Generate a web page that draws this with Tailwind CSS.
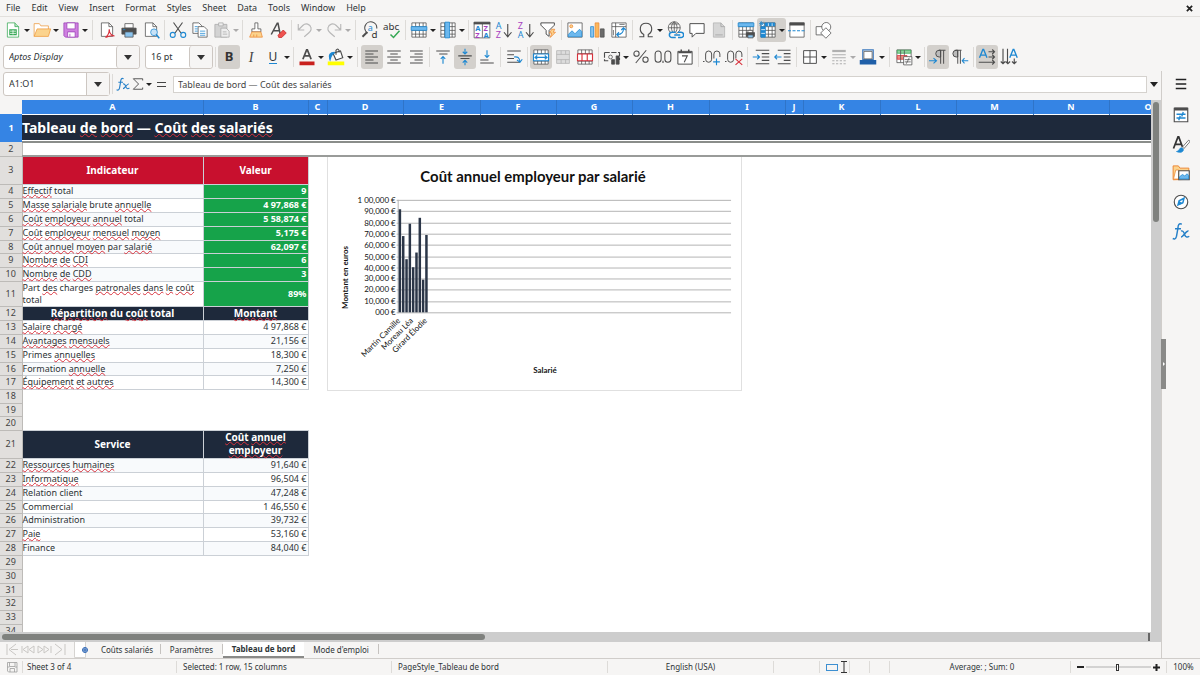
<!DOCTYPE html>
<html lang="fr">
<head>
    <meta charset="UTF-8">
    <meta name="viewport" content="width=device-width, initial-scale=1.0">
    <title>Tableau de bord</title>
    <script src="https://cdn.jsdelivr.net/npm/@tailwindcss/browser@4"></script>
</head>
<!-- fill and stroke on body are inherited by every icon -->
<body class="flex h-screen flex-col overflow-hidden bg-[#f6f5f4] fill-none stroke-[#4d4d4d] font-['Noto_Sans','Open_Sans',sans-serif] text-[9px] text-[#2e3436]">

    <!-- icons, all on a 24 grid -->
    <svg class="hidden">
        <symbol id="new" viewBox="0 0 24 24"><path stroke="#35a854" fill="#fff" d="M4.500 2.500h10l5 5v14h-15z"/><path stroke="#35a854" fill="#b9e6c3" d="M14.500 2.500v5h5"/><path stroke="none" fill="#35a854" d="M7 11h10v8H7z"/><path stroke="#fff" d="M8 13.500h8M8 16.500h8M12 12v6"/></symbol>
        <symbol id="open" viewBox="0 0 24 24"><path stroke="#ed9a3c" fill="#fff" d="M1.500 20.500v-17h7l2 3h10v5"/><path stroke="#ed9a3c" fill="#fbd38d" d="M1.500 20.500l4-10h18l-3 10z"/></symbol>
        <symbol id="save" viewBox="0 0 24 24"><path stroke="#9b3fb5" fill="#cf80e0" d="M2.500 2.500h19v19h-17l-2-2z"/><path stroke="#9b3fb5" fill="#fff" d="M6.500 2.500h11v8h-11zM7.500 14.500h10v7h-10z"/><path stroke="#9b3fb5" d="M10.500 17v4"/></symbol>
        <symbol id="pdf" viewBox="0 0 24 24"><path fill="#fff" d="M4.500 2.500h10l5 5v13h-15z"/><path d="M14.500 2.500v5h5"/><path stroke="#d8313c" stroke-width="1.500" d="M10 22c4-3 5-7 5-11c0 5 2 8 7 9c-4-1-8 0-12 2z"/></symbol>
        <symbol id="print" viewBox="0 0 24 24"><path fill="#fff" d="M6.500 3.500h11v6h-11z"/><path fill="#4d4d4d" d="M2.500 9.500h19v8h-19z"/><path stroke="#1e88d2" d="M4 11.500h3"/><path fill="#8bc4ee" d="M6.500 14.500h11v7h-11z"/></symbol>
        <symbol id="preview" viewBox="0 0 24 24"><path fill="#fff" d="M4.500 2.500h10l5 5v13h-15z"/><path d="M14.500 2.500v5h5"/><circle cx="16" cy="15" r="4.500" stroke="#1e88d2" fill="#c7e2f7"/><path stroke="#1e88d2" stroke-width="2" d="M19 18l4 5"/></symbol>
        <symbol id="cut" viewBox="0 0 24 24"><path stroke-width="1.500" d="M6 2l10 14M18 2L8 16"/><circle cx="5" cy="18.500" r="3.300" stroke="#1e88d2" stroke-width="1.500"/><circle cx="19" cy="18.500" r="3.300" stroke="#1e88d2" stroke-width="1.500"/></symbol>
        <symbol id="copy" viewBox="0 0 24 24"><path fill="#fff" d="M2.500 2.500h8l4 4v10h-12z"/><path fill="#fff" d="M9.500 7.500h8l4 4v10h-12z"/><path stroke="#1e88d2" d="M5 7.500h4M5 10.500h4M5 13.500h4M12 13.500h7M12 16.500h7M12 19h7"/></symbol>
        <symbol id="paste" viewBox="0 0 24 24"><path stroke="#a8a8a8" fill="#d3d3d3" d="M2.500 4.500h16v17h-16z"/><path stroke="#a8a8a8" fill="#eee" d="M7.500 2.500h6v4h-6zM10.500 9.500h7l4 4v8h-11z"/><path stroke="#a8a8a8" d="M13 14.500h5M13 17.500h6"/></symbol>
        <symbol id="brush" viewBox="0 0 24 24"><path fill="#fff" d="M10.500 2.500h4v8h4v4h-12v-4h4z"/><path stroke="#ed8733" fill="#fbd38d" d="M6.500 14.500h12l2 7h-17zM9 21v-3M13 21v-3"/></symbol>
        <symbol id="clear" viewBox="0 0 24 24"><path stroke-width="2" d="M3 18L11 3h1l3 15M6 13h8"/><path stroke="#c62828" fill="#ef5350" d="M12 19l7-7l4 4l-6 6h-4z"/></symbol>
        <symbol id="undo" viewBox="0 0 24 24"><path stroke="#b8b8b8" stroke-width="1.500" d="M3 4v8h8M3 12l6-6c4-4 10-2 11 3c1 4-2 6-9 12"/></symbol>
        <symbol id="redo" viewBox="0 0 24 24"><path stroke="#b8b8b8" stroke-width="1.500" d="M21 4v8h-8M21 12l-6-6c-4-4-10-2-11 3c-1 4 2 6 9 12"/></symbol>
        <symbol id="find" viewBox="0 0 24 24"><path stroke-width="1.500" d="M9 16a8 8 0 1 1 12-6"/><path stroke-width="2.500" d="M8 15l-6 6"/><text x="9" y="13" stroke="none" fill="#1e88d2" font-size="12">a</text><text x="14" y="23" stroke="none" fill="#333" font-size="13">d</text></symbol>
        <symbol id="spell" viewBox="0 0 24 24"><text x="0" y="12" stroke="none" fill="#333" font-size="13">abc</text><path stroke="#35a854" stroke-width="2" d="M10 18l4 4l8-9"/></symbol>
        <symbol id="grid" viewBox="0 0 24 24"><path fill="#fff" d="M2.500 2.500h19v19h-19z"/><path d="M2.500 7.500h19M2.500 12.500h19M2.500 17.500h19M7.500 2.500v19M12.500 2.500v19M17.500 2.500v19"/></symbol>
        <symbol id="row" viewBox="0 0 24 24"><use href="#grid"/><path stroke="#1e88d2" fill="#6cb8ee" d="M1.500 7.500h21v5h-21z"/></symbol>
        <symbol id="col" viewBox="0 0 24 24"><use href="#grid"/><path stroke="#1e88d2" fill="#6cb8ee" d="M8 1.500h6v21H8z"/></symbol>
        <symbol id="sort" viewBox="0 0 24 24"><path fill="#fff" d="M1.500 1.500h21v21h-21z"/><path stroke-width="3" d="M1 3h22"/><path d="M12.500 3v19"/><g stroke="none" font-size="10" font-weight="bold"><text x="3" y="13" fill="#1e88d2">A</text><text x="3" y="22" fill="#a83fc0">Z</text><text x="14" y="13" fill="#a83fc0">Z</text><text x="14" y="22" fill="#1e88d2">A</text></g></symbol>
        <symbol id="az" viewBox="0 0 24 24"><g stroke="none" font-size="12"><text x="1" y="11" fill="#1e88d2">A</text><text x="1" y="23" fill="#a83fc0">Z</text></g><path stroke-width="1.500" d="M17 4v16M12 15l5 6l5-6"/></symbol>
        <symbol id="za" viewBox="0 0 24 24"><g stroke="none" font-size="12"><text x="1" y="11" fill="#a83fc0">Z</text><text x="1" y="23" fill="#1e88d2">A</text></g><path stroke-width="1.500" d="M17 4v16M12 15l5 6l5-6"/></symbol>
        <symbol id="filter" viewBox="0 0 24 24"><path stroke-width="1.300" fill="#fff" d="M2.500 2.500h18v3l-7 7v8l-4-3v-5l-7-7z"/><path stroke="#ed8733" fill="#fbd38d" d="M17 11h4l-2 4h3l-7 7l2-6h-3z"/></symbol>
        <symbol id="image" viewBox="0 0 24 24"><path fill="#fff" d="M2.500 2.500h19v19h-19z"/><circle cx="7" cy="7" r="2" stroke="#ed8733" fill="#fbd38d"/><path stroke="#1e88d2" fill="#6cb8ee" d="M3 21v-3l5-5l4 4l6-6l3 3v7z"/></symbol>
        <symbol id="chart" viewBox="0 0 24 24"><path stroke="#1e88d2" fill="#8bc4ee" d="M3.500 7.500h4v14h-4z"/><path stroke="#ed8733" fill="#fbb85c" d="M9.500 2.500h5v19h-5z"/><path fill="#6b6b6b" d="M16.500 10.500h5v11h-5z"/></symbol>
        <symbol id="pivot" viewBox="0 0 24 24"><path fill="#fff" d="M2.500 2.500h19v19h-19z"/><path d="M2.500 7.500h19M7.500 2.500v19M12.500 4.500h7M4.500 12v7"/><path stroke="#1e88d2" stroke-width="1.500" d="M10 18c5 0 8-2 8-8M15 12l3-3l3 3M12 15l-3 3l3 3"/></symbol>
        <symbol id="omega" viewBox="0 0 24 24"><path stroke-width="1.500" d="M3 21h6v-3c-7-4-6-15 3-15s10 11 3 15v3h6"/></symbol>
        <symbol id="link" viewBox="0 0 24 24"><circle cx="11" cy="9" r="8"/><path d="M3 9h16M11 1v16M5 4h12M11 1c-5 4-5 12 0 16M11 1c5 4 5 12 0 16"/><path stroke="#1e88d2" stroke-width="2" fill="#f6f5f4" d="M13 15h-5a3 3 0 0 0 0 7h5M16 15h4a3 3 0 0 1 0 7h-4M11 18.500h8"/></symbol>
        <symbol id="comment" viewBox="0 0 24 24"><path stroke-width="1.300" fill="#fff" d="M2.500 3.500h19v13h-11l-5 5v-5h-3z"/></symbol>
        <symbol id="header" viewBox="0 0 24 24"><path stroke="#b0b0b0" fill="#d6d6d6" d="M4.500 2.500h10l5 5v14h-15z"/><path stroke="#a0a0a0" d="M14.500 2.500v5h5M7 18.500h10"/></symbol>
        <symbol id="titles" viewBox="0 0 24 24"><use href="#grid"/><path stroke="#1e88d2" fill="#6cb8ee" d="M1.500 2.500h21v5h-21z"/><path fill="#fff" d="M14.500 12.500h6v4h-6z"/><path fill="#4d4d4d" d="M12.500 15.500h11v5h-11z"/><path fill="#8bc4ee" d="M14.500 18.500h7v4h-7z"/></symbol>
        <symbol id="freeze" viewBox="0 0 24 24"><use href="#grid"/><path stroke="#1e88d2" fill="#1e88d2" d="M2.500 7.500h6v14h-6zM8 2.500h13v4h-13z"/><path stroke="#fff" d="M3 11.500h5M3 16.500h5M12.500 3v4M17.500 3v4"/><path stroke="#1e88d2" d="M3 0v7M0 3.500h7M1 1l5 5M6 1l-5 5"/></symbol>
        <symbol id="split" viewBox="0 0 24 24"><path fill="#fff" d="M2.500 2.500h19v19h-19z"/><path stroke-width="4" d="M2 4h20"/><path stroke="#1e88d2" stroke-width="1.500" stroke-dasharray="4 2" d="M0 13h24"/></symbol>
        <symbol id="shapes" viewBox="0 0 24 24"><path fill="#fff" d="M1.500 7.500h10v11h-10z"/><circle cx="15" cy="8" r="6" fill="#fff"/><path fill="#fff" d="M14.500 9l7 7l-7 7l-7-7z"/></symbol>

        <symbol id="fontcolor" viewBox="0 0 24 24"><path stroke-width="2.300" d="M6.500 15l5-12.500h1l5 12.500M8.500 10.500h7"/><path stroke="none" fill="#c9211e" d="M2 18h20v5H2z"/></symbol>
        <symbol id="fill" viewBox="0 0 24 24"><path fill="#fff" stroke-width="1.500" d="M8 7l10-3l3 9l-9 3z"/><path stroke-width="1.500" d="M12 9V3c2-3 5-1 4 3"/><path stroke="#1e88d2" stroke-width="2" fill="#1e88d2" d="M4 15c-2-5 0-9 6-9c-4 2-5 5-6 9z"/><path stroke="none" fill="#ff0" d="M1 18h22v5H1z"/></symbol>
        <symbol id="left" viewBox="0 0 24 24"><path stroke-width="1.500" d="M3 4h17M3 8h11M3 12h17M3 16h11M3 20h17"/></symbol>
        <symbol id="center" viewBox="0 0 24 24"><path stroke-width="1.500" d="M3 4h18M7 8h10M3 12h18M7 16h10M3 20h18"/></symbol>
        <symbol id="right" viewBox="0 0 24 24"><path stroke-width="1.500" d="M4 4h17M10 8h11M4 12h17M10 16h11M4 20h17"/></symbol>
        <symbol id="top" viewBox="0 0 24 24"><path stroke-width="1.500" d="M3 4h18M7 8h11"/><path stroke="#1e88d2" stroke-width="1.500" d="M12 21v-9M9 14.500l3-3l3 3"/></symbol>
        <symbol id="middle" viewBox="0 0 24 24"><path stroke-width="1.500" d="M3 10.500h18M6 14h12"/><path stroke="#1e88d2" stroke-width="1.500" d="M12 1v7M9 5l3 3l3-3M12 23v-6M9 19.500l3-3l3 3"/></symbol>
        <symbol id="bottom" viewBox="0 0 24 24"><path stroke-width="1.500" d="M3 20h18M3 16h11"/><path stroke="#1e88d2" stroke-width="1.500" d="M12 3v9M9 9.500l3 3l3-3"/></symbol>
        <symbol id="wrap" viewBox="0 0 24 24"><path stroke-width="1.500" d="M3 4h18M3 9h9M3 14h9M3 19h17"/><path stroke="#1e88d2" stroke-width="1.500" d="M12 12c5-1 7 1 8 6M16 16l4 3l3-4"/></symbol>
        <symbol id="merge" viewBox="0 0 24 24"><use href="#grid"/><path stroke="#1e88d2" fill="#fff" stroke-width="1.500" d="M2 8h20v9H2z"/><path stroke="#1e88d2" stroke-width="1.500" d="M4 12.500h16M7 10l-3 2.500l3 2.500M17 10l3 2.500l-3 2.500"/></symbol>
        <symbol id="mergeoff" viewBox="0 0 24 24"><path stroke="#b0b0b0" fill="#ddd" d="M3.500 3.500h17v17h-17zM3.500 8.500h17M3.500 15.500h17M9.500 3.500v5M15.500 3.500v5M9.500 15.500v5M15.500 15.500v5"/></symbol>
        <symbol id="unmerge" viewBox="0 0 24 24"><use href="#grid"/><path stroke="#d8313c" fill="#fff" stroke-width="1.500" d="M2 8h20v9H2zM8 8v9M15 8v9"/></symbol>
        <symbol id="currency" viewBox="0 0 24 24"><path stroke-width="1.500" stroke-dasharray="7 2" d="M2 6h20v10M2 6v11h7"/><circle cx="10" cy="12" r="2.500"/><path fill="#4d4d4d" d="M11.500 15.500h4v6h-4zM17.500 10.500h4v11h-4z"/></symbol>
        <symbol id="date" viewBox="0 0 24 24"><path fill="#fff" stroke-width="1.300" d="M2.500 4.500h19v17h-19z"/><path stroke-width="2" d="M3 6h18M7 2v4M17 2v4"/><path stroke-width="1.500" d="M8 10.500h7l-4 8.500"/></symbol>
        <symbol id="adddec" viewBox="0 0 24 24"><path stroke-width="1.300" d="M0 18h2"/><rect x="3.500" y="4" width="8" height="15" rx="4" stroke-width="1.300"/><path stroke-width="1.300" d="M14.500 14V8a4 4 0 0 1 8 0v4"/><path stroke="#1e88d2" stroke-width="1.500" d="M18 14v9M13.500 18.500h9"/></symbol>
        <symbol id="deldec" viewBox="0 0 24 24"><path stroke-width="1.300" d="M0 18h2"/><rect x="3.500" y="4" width="8" height="15" rx="4" stroke-width="1.300"/><path stroke-width="1.300" d="M14.500 14V8a4 4 0 0 1 8 0v4"/><path stroke="#d8313c" stroke-width="1.500" d="M14 14.500l9 8M23 14.500l-9 8"/></symbol>
        <symbol id="number" viewBox="0 0 24 24"><rect x="1.500" y="4" width="8" height="15" rx="4" stroke-width="1.400"/><rect x="14.500" y="4" width="8" height="15" rx="4" stroke-width="1.400"/><path stroke-width="1.500" d="M12 17v3"/></symbol>
        <symbol id="percent" viewBox="0 0 24 24"><circle cx="6" cy="7.500" r="3.500" stroke-width="1.400"/><circle cx="18" cy="15.500" r="3.500" stroke-width="1.400"/><path stroke-width="1.400" d="M19 3L5 20"/></symbol>
        <symbol id="indent" viewBox="0 0 24 24"><path stroke-width="1.500" d="M5 3h18M13 7.500h10M13 12h10M13 16.500h10M5 21h18"/><path stroke="#1e88d2" stroke-width="1.500" d="M1 12h9M7 9l3 3l-3 3"/></symbol>
        <symbol id="outdent" viewBox="0 0 24 24"><path stroke-width="1.500" d="M5 3h17M13 7.500h9M13 12h9M13 16.500h9M5 21h17"/><path stroke="#1e88d2" stroke-width="1.500" d="M1 12h9M4 9l-3 3l3 3"/></symbol>
        <symbol id="borders" viewBox="0 0 24 24"><path fill="#fff" stroke-width="1.300" d="M3.500 3.500h17v17h-17z"/><path stroke-width="1.300" d="M12 3v17M3 12h17"/></symbol>
        <symbol id="lines" viewBox="0 0 24 24"><path stroke="#b0b0b0" stroke-width="3" d="M3 4h18"/><path stroke="#b0b0b0" stroke-width="1.500" d="M3 9h18M3 13h18"/><path stroke="#b0b0b0" stroke-width="1.500" stroke-dasharray="3 2" d="M3 17h18M3 21h18"/></symbol>
        <symbol id="bordercolor" viewBox="0 0 24 24"><path fill="#fff" stroke="#3b78bd" stroke-width="1.500" d="M5 2.500h14v13H5z"/><path d="M6.500 4.500h11v10h-11z"/><path stroke="none" fill="#1f5fa8" d="M1 16h22v6H1z"/></symbol>
        <symbol id="cond" viewBox="0 0 24 24"><path fill="#fff" d="M2.500 2.500h19v17h-19z"/><path stroke="#35a854" fill="#8fd3a0" d="M3 3h18v4H3z"/><path stroke="#d8313c" fill="#ef8a80" d="M3 10h13v5H3z"/><path d="M7.500 3v16M12.500 3v7"/><path fill="#fff" d="M11.500 11.500h11v11h-11z"/><path d="M13 15.500h8M13 18.500h8M19 13l-4 8"/></symbol>
        <symbol id="ltr" viewBox="0 0 24 24"><path stroke-width="1.300" fill="#bbb" d="M13 3h9M19.500 3v18M15.500 3v18M15.500 12h-2a4.500 4.500 0 0 1 0-9h2z"/><path stroke="#1e88d2" stroke-width="1.500" d="M0 17h9M6 13.500l4 3.500l-4 3.500"/></symbol>
        <symbol id="rtl" viewBox="0 0 24 24"><path stroke-width="1.300" fill="#bbb" d="M5 3h9M12.500 3v18M9 3v18M9 12H7a4.500 4.500 0 0 1 0-9h2z"/><path stroke="#1e88d2" stroke-width="1.500" d="M15 17h8M18 13.500l-3 3.500l3 3.500"/></symbol>
        <symbol id="horiz" viewBox="0 0 24 24"><path stroke="#1e88d2" stroke-width="1.800" d="M2 13l4.500-11h1l4.500 11M4 9.500h6"/><path stroke-width="1.500" d="M14 5h8M19 2l3 3l-3 3M14 12h8M19 9l3 3l-3 3M1 19h21M19 16l3 3l-3 3"/></symbol>
        <symbol id="vert" viewBox="0 0 24 24"><path stroke="#1e88d2" stroke-width="1.800" d="M13 13l4.500-11h1l4.500 11M15 9.500h6"/><path stroke-width="1.500" d="M4 1v20M1 18l3 3l3-3M10 1v20M7.500 18l3 3l3-3M19 14v7M16 18l3 3l3-3"/></symbol>

        <symbol id="menu" viewBox="0 0 24 24"><path stroke="#222" stroke-width="2" d="M5 6h14M5 12h14M5 18h14"/></symbol>
        <symbol id="props" viewBox="0 0 24 24"><path fill="#fff" stroke-width="1.500" d="M3 3h18v18H3z"/><path stroke-width="4" d="M3 4h18"/><path stroke="#1e88d2" stroke-width="1.800" d="M6 11h12M6 16h12M15 8l-2 6M11 13l-2 6"/></symbol>
        <symbol id="styles" viewBox="0 0 24 24"><path stroke="#333" stroke-width="2.300" d="M2 18L8 2.500h1L14 16M4.500 12.500h8"/><path fill="#fff" d="M14 16l8-9c2 0 2 2 1 3l-7 8z"/><path stroke="#1e88d2" fill="#1e88d2" d="M6 22c4 0 3-5 7-5c3 1 3 5-1 6c-2 0-4 0-6-1z"/></symbol>
        <symbol id="gallery" viewBox="0 0 24 24"><path stroke="#ed8733" fill="#fbd38d" stroke-width="1.300" d="M1.500 21V2.500h7l2 3h12l-1 15z"/><path stroke="#ed8733" fill="#fff" d="M2 20l3-12h4v12z"/><path fill="#fff" stroke-width="1.500" d="M9 9h14v12H9z"/><path stroke="#1e88d2" fill="#6cb8ee" d="M10 20v-3l4-3l3 2l3-3l2 2v5z"/></symbol>
        <symbol id="navigator" viewBox="0 0 24 24"><circle cx="12" cy="12" r="9" fill="#fff" stroke-width="1.500"/><path stroke="#1e88d2" stroke-width="2" fill="#fff" d="M8 16l1.500-5.500l6.500-3.500l-1.500 6z"/><path stroke="none" fill="#1e88d2" d="M8 16l1.500-5.500l5 3.500z"/></symbol>
        <symbol id="fx" viewBox="0 0 24 24"><g stroke="#2680c8" stroke-width="1.900"><path d="M13 3c-4-2-5 2-5 5L6 19c-1 4-3 4-5 3M4 9h8"/><path d="M12 12c3-1 4 2 5 5s3 4 6 2M22 12c-3-1-7 8-10 8"/></g></symbol>
        <symbol id="sum" viewBox="0 0 24 24"><path stroke-width="1.600" d="M20 6V3H4l9 9l-9 9h16v-3"/></symbol>
        <symbol id="disk" viewBox="0 0 24 24"><path stroke="#999" stroke-width="1.500" d="M3 3h19v19H5l-2-2zM7 3v8h11V3M8 22v-7h9v7M3 12h4M18 12h4"/></symbol>
    </svg>

    <!-- menu bar -->
    <header class="flex h-[17px] shrink-0 items-center justify-between border-b border-[#e2e0dd] pr-[7px] pl-[6px]">
        <nav class="flex gap-[11px]">
            <a href="#">File</a><a href="#">Edit</a><a href="#">View</a><a href="#">Insert</a><a href="#">Format</a><a href="#">Styles</a><a href="#">Sheet</a><a href="#">Data</a><a href="#">Tools</a><a href="#">Window</a><a href="#">Help</a>
        </nav>
        <button aria-label="Close"><svg class="size-[7px]" viewBox="0 0 8 8" stroke="#222" stroke-width="2"><path d="M1 1l6 6M7 1L1 7"/></svg></button>
    </header>

    <!-- standard toolbar -->
    <div class="flex h-[26px] shrink-0 items-center pl-[2px] [&_button]:flex [&_button]:h-6 [&_button]:shrink-0 [&_button]:items-center [&_hr]:mx-[2px] [&_hr]:h-5 [&_hr]:w-px [&_hr]:border-0 [&_hr]:bg-[#dddbd8] [&_i]:mr-px [&_i]:border-x-[3px] [&_i]:border-t-[3px] [&_i]:border-x-transparent [&_i]:border-t-[#222] [&_svg]:mx-[2px] [&_svg]:size-[18px]">
        <button aria-label="New"><svg><use href="#new"/></svg></button><button aria-label="New menu"><i></i></button>
        <button aria-label="Open"><svg><use href="#open"/></svg></button><button aria-label="Open menu"><i></i></button>
        <button aria-label="Save"><svg><use href="#save"/></svg></button><button aria-label="Save menu"><i></i></button>
        <span class="px-px"><hr></span>
        <button aria-label="Export as PDF"><svg><use href="#pdf"/></svg></button>
        <button aria-label="Print"><svg><use href="#print"/></svg></button>
        <button aria-label="Print preview"><svg><use href="#preview"/></svg></button>
        <hr>
        <button aria-label="Cut"><svg><use href="#cut"/></svg></button>
        <button aria-label="Copy"><svg><use href="#copy"/></svg></button>
        <button aria-label="Paste"><svg><use href="#paste"/></svg></button><button aria-label="Paste menu" class="opacity-35"><i></i></button>
        <hr>
        <button aria-label="Clone formatting"><svg><use href="#brush"/></svg></button>
        <button aria-label="Clear formatting"><svg><use href="#clear"/></svg></button>
        <hr>
        <button aria-label="Undo"><svg><use href="#undo"/></svg></button><button aria-label="Undo menu" class="opacity-35"><i></i></button>
        <button aria-label="Redo"><svg><use href="#redo"/></svg></button><button aria-label="Redo menu" class="opacity-35"><i></i></button>
        <span class="px-px"><hr></span>
        <button aria-label="Find and replace"><svg><use href="#find"/></svg></button>
        <button aria-label="Spelling"><svg><use href="#spell"/></svg></button>
        <hr>
        <button aria-label="Row"><svg><use href="#row"/></svg></button><button aria-label="Row menu"><i></i></button>
        <button aria-label="Column"><svg><use href="#col"/></svg></button><button aria-label="Column menu"><i></i></button>
        <hr>
        <button aria-label="Sort"><svg><use href="#sort"/></svg></button>
        <button aria-label="Sort ascending"><svg><use href="#az"/></svg></button>
        <button aria-label="Sort descending"><svg><use href="#za"/></svg></button>
        <button aria-label="AutoFilter"><svg><use href="#filter"/></svg></button>
        <hr>
        <button aria-label="Image"><svg><use href="#image"/></svg></button>
        <button aria-label="Chart"><svg><use href="#chart"/></svg></button>
        <button aria-label="Pivot table"><svg><use href="#pivot"/></svg></button>
        <hr>
        <button aria-label="Special character"><svg><use href="#omega"/></svg></button><button aria-label="Character menu"><i></i></button>
        <button aria-label="Hyperlink"><svg><use href="#link"/></svg></button>
        <button aria-label="Comment"><svg><use href="#comment"/></svg></button>
        <button aria-label="Headers and footers"><svg><use href="#header"/></svg></button>
        <hr>
        <button aria-label="Print area"><svg><use href="#titles"/></svg></button>
        <span class="flex rounded-[3px] bg-[#d3d0cc]"><button aria-label="Freeze rows and columns"><svg><use href="#freeze"/></svg></button><button aria-label="Freeze menu"><i></i></button></span>
        <button aria-label="Split window"><svg><use href="#split"/></svg></button>
        <hr>
        <button aria-label="Draw functions"><svg><use href="#shapes"/></svg></button>
    </div>

    <!-- formatting toolbar -->
    <div class="flex h-7 shrink-0 items-center pl-[3px] [&_button]:flex [&_button]:h-6 [&_button]:shrink-0 [&_button]:items-center [&_button]:rounded-[3px] [&_hr]:mx-[2px] [&_hr]:h-5 [&_hr]:w-px [&_hr]:border-0 [&_hr]:bg-[#dddbd8] [&_i]:mr-px [&_i]:border-x-[3px] [&_i]:border-t-[3px] [&_i]:border-x-transparent [&_i]:border-t-[#222] [&_svg]:mx-[2px] [&_svg]:size-[18px]">
        <div class="flex h-6 w-[137px] rounded-[3px] border border-[#cdc7c2] bg-white">
            <input aria-label="Font name" value="Aptos Display" class="w-0 flex-1 pl-[5px] italic">
            <button aria-label="Fonts" class="h-full! w-[23px] justify-center border-l border-[#cdc7c2] bg-[#f6f5f4]"><b class="border-x-4 border-t-[5px] border-x-transparent border-t-[#333]"></b></button>
        </div>
        <div class="ml-[5px] flex h-6 w-[68px] rounded-[3px] border border-[#cdc7c2] bg-white">
            <input aria-label="Font size" value="16 pt" class="w-0 flex-1 pl-[5px]">
            <button aria-label="Sizes" class="h-full! w-[23px] justify-center border-l border-[#cdc7c2] bg-[#f6f5f4]"><b class="border-x-4 border-t-[5px] border-x-transparent border-t-[#333]"></b></button>
        </div>
        <hr>
        <button aria-label="Bold" class="w-[22px] justify-center bg-[#d3d0cc] text-[13px] font-bold text-[#333]">B</button>
        <button aria-label="Italic" class="w-[22px] justify-center font-['Liberation_Serif',serif] text-[14px] text-[#444] italic">I</button>
        <button aria-label="Underline" class="w-[22px] justify-center text-[12px]"><span class="border-b border-[#1e88d2] leading-[13px]">U</span></button><button aria-label="Underline menu"><i></i></button>
        <hr>
        <button aria-label="Font color"><svg><use href="#fontcolor"/></svg></button><button aria-label="Font color menu"><i></i></button>
        <button aria-label="Background color"><svg><use href="#fill"/></svg></button><button aria-label="Background menu"><i></i></button>
        <span class="px-px"><hr></span>
        <button aria-label="Align left" class="bg-[#d3d0cc]"><svg><use href="#left"/></svg></button>
        <button aria-label="Center"><svg><use href="#center"/></svg></button>
        <button aria-label="Align right"><svg><use href="#right"/></svg></button>
        <hr>
        <button aria-label="Align top"><svg><use href="#top"/></svg></button>
        <button aria-label="Center vertically" class="bg-[#d3d0cc]"><svg><use href="#middle"/></svg></button>
        <button aria-label="Align bottom"><svg><use href="#bottom"/></svg></button>
        <hr>
        <button aria-label="Wrap text"><svg><use href="#wrap"/></svg></button>
        <hr>
        <button aria-label="Merge and center" class="bg-[#d3d0cc]"><svg><use href="#merge"/></svg></button>
        <button aria-label="Merge cells"><svg><use href="#mergeoff"/></svg></button>
        <button aria-label="Unmerge cells"><svg><use href="#unmerge"/></svg></button>
        <hr>
        <button aria-label="Currency"><svg><use href="#currency"/></svg></button><button aria-label="Currency menu"><i></i></button>
        <button aria-label="Percent"><svg><use href="#percent"/></svg></button>
        <button aria-label="Number"><svg><use href="#number"/></svg></button>
        <button aria-label="Date"><svg><use href="#date"/></svg></button>
        <hr>
        <button aria-label="Add decimal place"><svg><use href="#adddec"/></svg></button>
        <button aria-label="Delete decimal place"><svg><use href="#deldec"/></svg></button>
        <hr>
        <button aria-label="Increase indent"><svg><use href="#indent"/></svg></button>
        <button aria-label="Decrease indent"><svg><use href="#outdent"/></svg></button>
        <hr>
        <button aria-label="Borders"><svg><use href="#borders"/></svg></button><button aria-label="Borders menu"><i></i></button>
        <button aria-label="Border style"><svg><use href="#lines"/></svg></button><button aria-label="Border style menu" class="opacity-35"><i></i></button>
        <button aria-label="Border color"><svg><use href="#bordercolor"/></svg></button><button aria-label="Border color menu"><i></i></button>
        <span class="px-px"><hr></span>
        <button aria-label="Conditional formatting"><svg><use href="#cond"/></svg></button><button aria-label="Conditional menu"><i></i></button>
        <hr>
        <button aria-label="Left to right" class="bg-[#d3d0cc]"><svg><use href="#ltr"/></svg></button>
        <button aria-label="Right to left"><svg><use href="#rtl"/></svg></button>
        <hr>
        <button aria-label="Text left to right" class="bg-[#d3d0cc]"><svg><use href="#horiz"/></svg></button>
        <button aria-label="Text top to bottom"><svg><use href="#vert"/></svg></button>
    </div>

    <div class="flex min-h-0 flex-1">
        <main class="flex min-w-0 flex-1 flex-col border-r border-[#d0cdca]">
            <!-- formula bar -->
            <div class="flex h-[29px] shrink-0 items-center pb-[3px] pl-[3px]">
                <div class="flex h-6 w-[107px] rounded-[3px] border border-[#cdc7c2] bg-white">
                    <input aria-label="Name box" value="A1:O1" class="w-0 flex-1 pl-[5px]">
                    <button aria-label="Named ranges" class="flex w-[23px] items-center justify-center border-l border-[#cdc7c2] bg-[#f6f5f4]"><b class="border-x-4 border-t-[5px] border-x-transparent border-t-[#333]"></b></button>
                </div>
                <hr class="mx-[2px] h-5 w-px border-0 bg-[#dddbd8]">
                <button aria-label="Function wizard" class="px-px"><svg class="h-4 w-[14px]"><use href="#fx"/></svg></button>
                <button aria-label="Select function"><svg class="h-4 w-[14px]"><use href="#sum"/></svg></button>
                <button aria-label="Function menu" class="px-px"><i class="block border-x-[3px] border-t-[3px] border-x-transparent border-t-[#222]"></i></button>
                <button aria-label="Formula" class="mx-1 flex h-6 w-3 items-center"><span class="h-[5px] w-[9px] border-y border-[#444]"></span></button>
                <input aria-label="Input line" value="Tableau de bord — Coût des salariés" class="h-[17px] min-w-0 flex-1 border border-[#d5d2ce] bg-white pl-1 text-[#444]">
                <button aria-label="Expand formula bar" class="px-[2px]"><b class="mx-px block border-x-4 border-t-[5px] border-x-transparent border-t-[#222]"></b></button>
            </div>

            <!-- sheet -->
            <div class="flex min-h-0 flex-1 bg-[#cdcdcd]">
                <div class="relative min-w-0 flex-1 overflow-hidden bg-white">
                    <table class="w-[1187px] table-fixed border-collapse leading-3 [&_u]:underline [&_u]:decoration-[#d8313c] [&_u]:decoration-wavy [&_u]:decoration-1 [&_u]:underline-offset-0 [&_u]:[text-decoration-skip-ink:none]">
                        <colgroup id="cols"></colgroup>
                        <thead><tr id="letters" class="h-[14px] bg-[#3584e4] text-white"></tr></thead>
                        <tbody id="rows"></tbody>
                    </table>

                    <!-- chart floating over the cells -->
                    <svg class="absolute top-[57px] left-[327px] h-[234px] w-[415px] border border-t-0 border-[#e0e0e0] bg-white font-['Lato',sans-serif]" viewBox="0 0 415 234" fill="#111" stroke="none">
                        <text x="206" y="25" text-anchor="middle" font-size="15" font-weight="bold">Coût annuel employeur par salarié</text>
                        <g id="grid-lines" stroke="#b3b3b3"></g>
                        <g id="axis" font-size="8" text-anchor="end"></g>
                        <g id="bars" fill="#2b3648"></g>
                        <g font-size="8" text-anchor="end">
                            <text transform="translate(73 165) rotate(-45)">Martin Camille</text>
                            <text transform="translate(86 165) rotate(-45)">Moreau Léa</text>
                            <text transform="translate(100 165) rotate(-45)">Girard Élodie</text>
                        </g>
                        <text transform="translate(20 121) rotate(-90)" text-anchor="middle" font-size="8" font-weight="bold">Montant en euros</text>
                        <text x="218" y="217" text-anchor="middle" font-size="8" font-weight="bold">Salarié</text>
                    </svg>
                </div>
                <div class="w-[10px] shrink-0 px-[2px] pt-[2px]"><div class="h-[120px] rounded-full bg-[#7f817e]"></div></div>
            </div>
            <div class="flex h-[10px] shrink-0 items-center bg-[#cdcdcd] pr-[11px] pl-[2px]">
                <div class="h-[6px] w-[483px] rounded-full bg-[#7f817e]"></div>
                <div class="ml-auto h-2 w-[2px] bg-[#666]"></div>
            </div>

            <!-- sheet tabs -->
            <div class="flex h-4 shrink-0 text-[8px]">
                <svg class="mx-[6px] h-[15px] w-[60px]" viewBox="0 0 60 15" stroke="#c9c7c4"><path d="M1 2v11M10 2L3 7.500L10 13M12 7.500h-7M16 4v7M22 4l-5 3.500l5 3.500zM28 4l-5 3.500l5 3.500zM32 4l5 3.500l-5 3.500zM38 4l5 3.500l-5 3.500zM45 4v7M49 2l7 5.500l-7 5.500M59 2v11"/></svg>
                <button aria-label="Add sheet" class="mr-[6px] ml-[2px]"><svg class="h-4 w-[14px]" viewBox="0 0 14 16"><path fill="#fff" stroke="#d6d4d1" d="M.5-1h11v16.500H.5z"/><circle cx="11" cy="8" r="2.500" fill="#cfe0f5" stroke="#2a62b0"/><path stroke="#2a62b0" d="M11 6v4M9 8h4"/></svg></button>
                <button class="mt-[2px] mb-1 w-[67px] border-r border-[#c5c2bf]">Coûts salariés</button>
                <button class="mt-[2px] mb-1 w-[62px] border-r border-[#c5c2bf]">Paramètres</button>
                <button class="w-[81px] border-b-2 border-[#8a8a88] bg-white font-bold">Tableau de bord</button>
                <button class="mt-[2px] mb-1 w-[75px] border-r border-[#c5c2bf]">Mode d'emploi</button>
            </div>
        </main>

        <!-- sidebar -->
        <aside class="relative flex w-[38px] shrink-0 flex-col items-center gap-[11px] pt-1 [&_svg]:size-[18px]">
            <button aria-label="Sidebar settings"><svg><use href="#menu"/></svg></button>
            <button aria-label="Properties" class="mt-[2px]"><svg><use href="#props"/></svg></button>
            <button aria-label="Styles"><svg><use href="#styles"/></svg></button>
            <button aria-label="Gallery"><svg><use href="#gallery"/></svg></button>
            <button aria-label="Navigator"><svg><use href="#navigator"/></svg></button>
            <button aria-label="Functions"><svg><use href="#fx"/></svg></button>
            <button aria-label="Hide sidebar" class="absolute top-[268px] -left-px flex h-[50px] w-[5px] items-center justify-center bg-[#8a8a88]"><b class="border-y-2 border-l-2 border-y-transparent border-l-white"></b></button>
        </aside>
    </div>

    <!-- status bar -->
    <footer class="flex h-[17px] shrink-0 items-center border-t border-[#d0cdca] text-[8px] [&>*]:flex [&>*]:h-3 [&>*]:items-center [&>*]:border-r [&>*]:border-[#dddbd8]">
        <span class="w-[23px] pl-[6px]"><svg class="size-3"><use href="#disk"/></svg></span>
        <span class="w-[154px] pl-1">Sheet 3 of 4</span>
        <span class="w-[215px] pl-[6px]">Selected: 1 row, 15 columns</span>
        <span class="w-[216px] pl-[6px]">PageStyle_Tableau de bord</span>
        <span class="flex-1 justify-center">English (USA)</span>
        <span class="w-[46px]"></span>
        <span class="w-[30px] gap-[3px] pl-[6px]"><b class="h-[7px] w-3 border border-[#3d8fd1]"></b><svg class="h-3 w-[6px]" viewBox="0 0 6 12" stroke="#333"><path d="M0 .5h6M0 11.500h6M3 1v10"/></svg></span>
        <span class="w-5"></span>
        <span class="w-5"></span>
        <span class="w-[181px] justify-center pl-1">Average: ; Sum: 0</span>
        <span class="w-24 justify-between px-[6px]">
            <button aria-label="Zoom out" class="h-[2px] w-[7px] bg-[#222]"></button>
            <input type="range" aria-label="Zoom" min="0" max="100" value="48" class="h-2 w-[65px] appearance-none bg-linear-to-b from-transparent from-40% via-[#999] via-50% to-transparent to-60% [&::-webkit-slider-thumb]:h-[7px] [&::-webkit-slider-thumb]:w-[3px] [&::-webkit-slider-thumb]:appearance-none [&::-webkit-slider-thumb]:border [&::-webkit-slider-thumb]:border-[#333] [&::-webkit-slider-thumb]:bg-white">
            <button aria-label="Zoom in"><svg class="size-[7px]" viewBox="0 0 7 7" stroke="#222" stroke-width="2"><path d="M0 3.500h7M3.500 0v7"/></svg></button>
        </span>
        <span class="w-[33px] justify-center border-0!">100%</span>
    </footer>

    <script>
        // column widths, row number column first
        const widths = [22, 181, 105, 19, 76, 77, 76, 76, 77, 76, 18, 77, 76, 77, 76, 78];
        const names = ['', ...'ABCDEFGHIJKLMNO'];
        document.getElementById('cols').innerHTML = widths.map(w => `<col style="width:${w}px">`).join('');
        document.getElementById('letters').innerHTML = names.map(n =>
            n ? `<th class="border-r border-[#2f74c8] p-0">${n}</th>` : '<th class="bg-[#f6f5f4] p-0"></th>').join('');

        // [height, kind, A, B]; <u> marks a spelling mistake
        const rows = [
            [28, 'title', 'Tableau <u>de</u> <u>bord</u> — <u>Coût</u> <u>des</u> <u>salariés</u>'],
            [14, 'frozen'],
            [28, 'red', 'Indicateur', 'Valeur'],
            [14, 'green', '<u>Effectif</u> total', '9'],
            [14, 'green', '<u>Masse</u> <u>salariale</u> brute <u>annuelle</u>', '4 97,868 €'],
            [14, 'green', '<u>Coût</u> <u>employeur</u> <u>annuel</u> total', '5 58,874 €'],
            [14, 'green', '<u>Coût</u> <u>employeur</u> <u>mensuel</u> <u>moyen</u>', '5,175 €'],
            [13, 'green', '<u>Coût</u> <u>annuel</u> <u>moyen</u> par <u>salarié</u>', '62,097 €'],
            [14, 'green', '<u>Nombre</u> <u>de</u> <u>CDI</u>', '6'],
            [14, 'green', '<u>Nombre</u> <u>de</u> <u>CDD</u>', '3'],
            [25, 'green', 'Part <u>des</u> charges <u>patronales</u> <u>dans</u> <u>le</u> <u>coût</u> total', '89%'],
            [14, 'navy', '<u>Répartition</u> du <u>coût</u> total', '<u>Montant</u>'],
            [14, 'data', '<u>Salaire</u> <u>chargé</u>', '4 97,868 €'],
            [14, 'data', '<u>Avantages</u> <u>mensuels</u>', '21,156 €'],
            [14, 'data', 'Primes <u>annuelles</u>', '18,300 €'],
            [13, 'data', 'Formation <u>annuelle</u>', '7,250 €'],
            [14, 'data', '<u>Équipement</u> <u>et</u> <u>autres</u>', '14,300 €'],
            [14], [13], [14],
            [28, 'navy', 'Service', '<u>Coût</u> <u>annuel</u> <u>employeur</u>'],
            [14, 'data', '<u>Ressources</u> <u>humaines</u>', '91,640 €'],
            [14, 'data', '<u>Informatique</u>', '96,504 €'],
            [14, 'data', 'Relation client', '47,248 €'],
            [13, 'data', 'Commercial', '1 46,550 €'],
            [14, 'data', 'Administration', '39,732 €'],
            [14, 'data', '<u>Paie</u>', '53,160 €'],
            [14, 'data', 'Finance', '84,040 €'],
            [14], [14], [13], [14], [14], [14]
        ];

        const kinds = {
            red: ['bg-[#c8102e] text-center text-[10px] font-bold text-white', 'bg-[#c8102e] text-center text-[10px] font-bold text-white'],
            navy: ['bg-[#1e293b] text-center text-[10px] leading-[13px] font-bold text-white', 'bg-[#1e293b] px-2 text-center text-[10px] leading-[13px] font-bold text-white'],
            green: ['pl-0', 'bg-[#16a34a] pr-px text-right font-bold text-white'],
            data: ['pl-0', 'pr-px text-right']
        };

        document.getElementById('rows').innerHTML = rows.map(([h, kind, a, b], i) => {
            const head = i === 0
                ? '<th class="bg-[#3584e4] p-0 text-white">1</th>'
                : `<th class="border-r border-b border-[#bdbbb8] bg-[#e1dfdd] p-0 font-normal text-[#444]">${i + 1}</th>`;
            let cells = '<td colspan="15" class="p-0"></td>';
            if (kind === 'title') {
                cells = `<td colspan="15" class="border-t border-b-2 border-t-white border-b-[#8a8d8a] bg-[#1e293b] p-0 text-[14px] leading-5 font-bold text-white shadow-[inset_0_-1px_0_#fff]">${a}</td>`;
            } else if (kind === 'frozen') {
                cells = '<td colspan="15" class="border-b-2 border-[#999b99] p-0"></td>';
            } else if (kind) {
                const [ca, cb] = kinds[kind];
                const stripe = kind === 'red' || kind === 'navy' ? '' : i % 2 ? 'bg-[#f8fafc]' : 'bg-white';
                cells = `<td class="border border-l-0 border-[#cbd0d6] ${stripe} py-0 ${ca}">${a}</td>`
                    + `<td class="border border-[#cbd0d6] ${kind === 'data' ? stripe : ''} py-0 ${cb}">${b}</td>`
                    + '<td colspan="13" class="p-0"></td>';
            }
            return `<tr style="height:${h}px">${head}${cells}</tr>`;
        }).join('');

        // chart: one grid line per 10 000 €
        let lines = '', labels = '';
        for (let k = 0; k <= 10; k++) {
            const y = Math.round(156 - k * 11.3);
            lines += `<path d="M69 ${y}.5h336"/>`;
            labels += `<text x="68" y="${y + 3}">${k === 10 ? '1 00,000' : k ? k + '0,000' : '000'} €</text>`;
        }
        document.getElementById('grid-lines').innerHTML = lines + '<path d="M70.5 43v114"/>';
        document.getElementById('axis').innerHTML = labels;
        document.getElementById('bars').innerHTML = [91640, 67800, 47248, 78750, 40100, 53160, 84040, 29000, 68754]
            .map((v, k) => `<rect x="${71 + k * 10 / 3}" y="${156 - v * 113 / 100000}" width="2.5" height="${v * 113 / 100000}"/>`).join('');
    </script>
</body>
</html>
